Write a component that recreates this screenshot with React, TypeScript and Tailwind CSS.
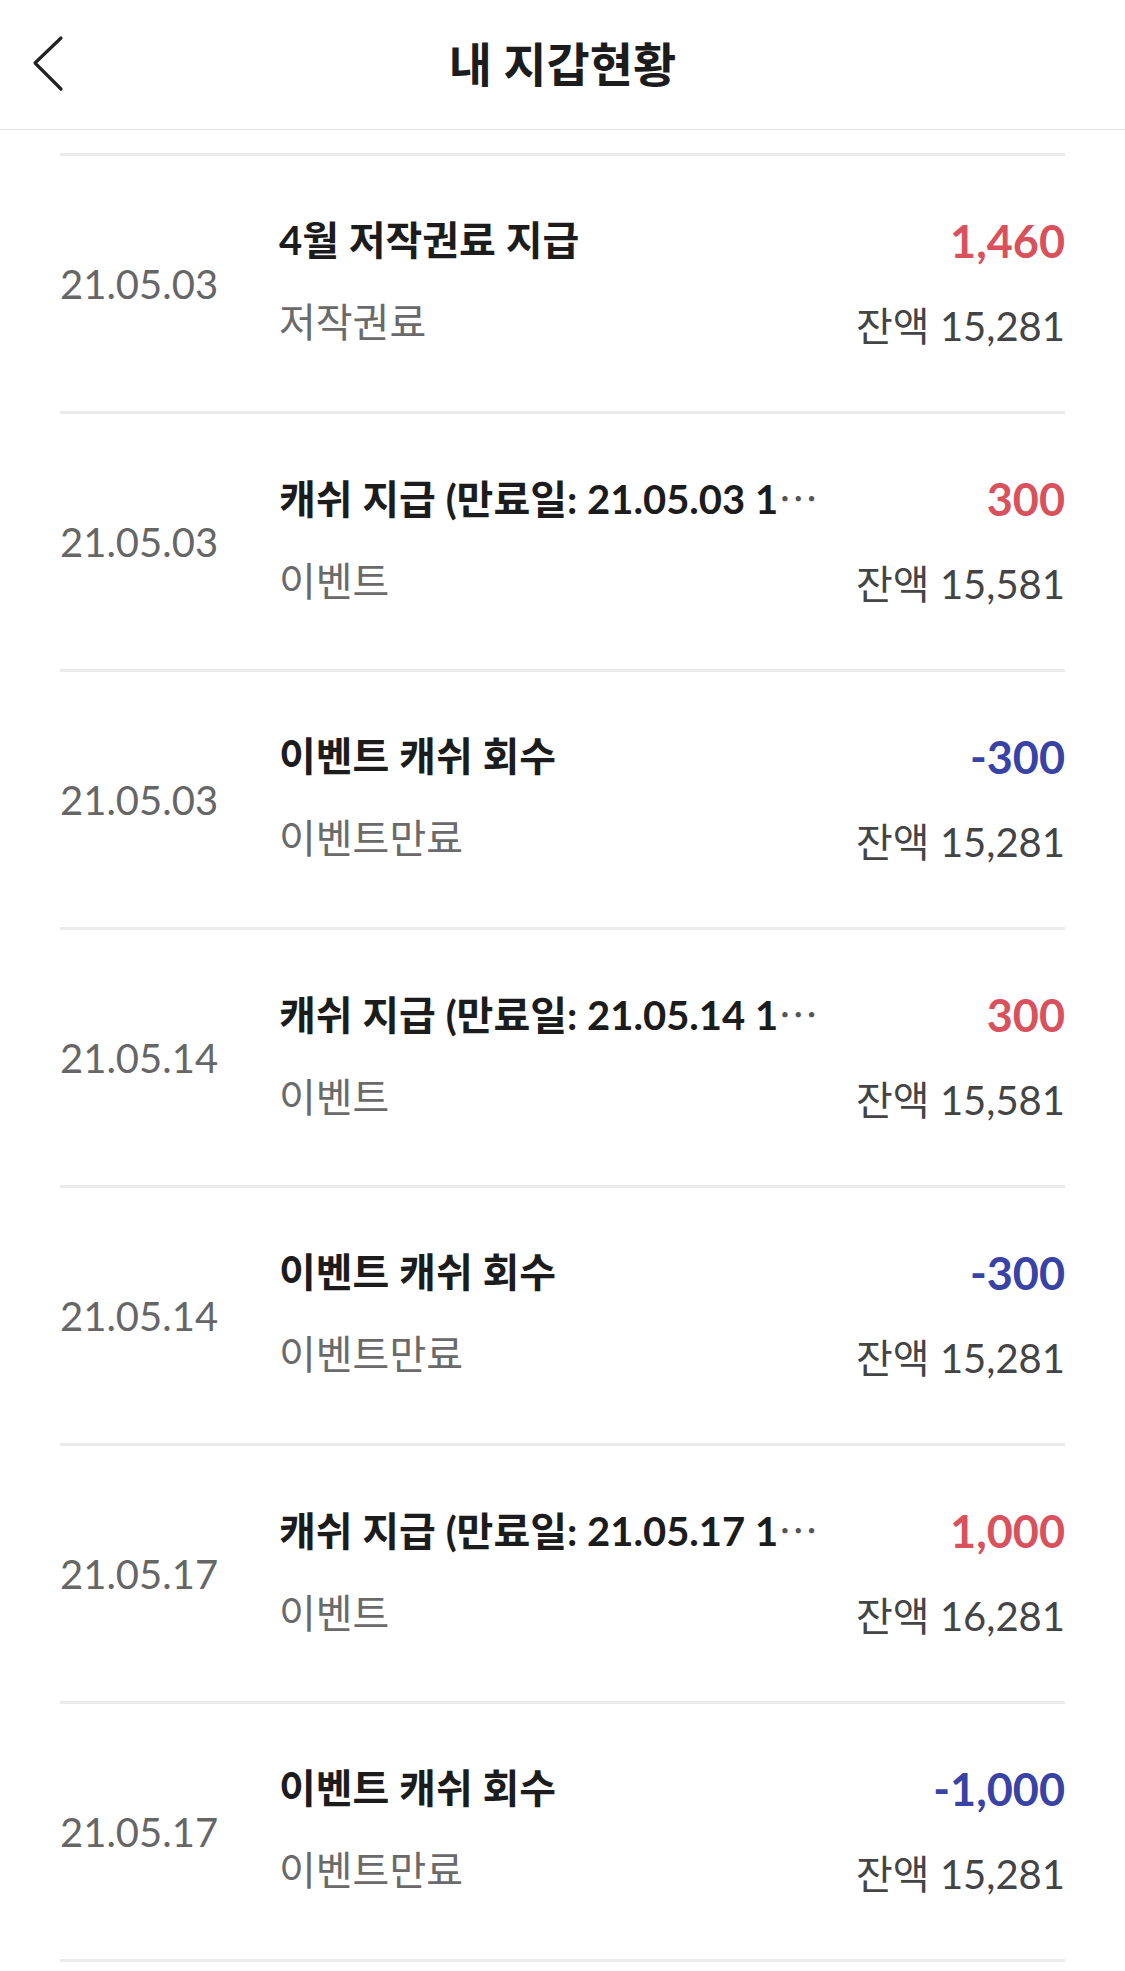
import { ReactNode } from 'react';

interface WalletRow {
  date: string;
  title: string;
  cut?: boolean;
  label: string;
  amount: string;
  balance: string;
}

const rows: WalletRow[] = [
  { date: '21.05.03', title: '4월 저작권료 지급', label: '저작권료', amount: '1,460', balance: '15,281' },
  { date: '21.05.03', title: '캐쉬 지급 (만료일: 21.05.03 1', cut: true, label: '이벤트', amount: '300', balance: '15,581' },
  { date: '21.05.03', title: '이벤트 캐쉬 회수', label: '이벤트만료', amount: '-300', balance: '15,281' },
  { date: '21.05.14', title: '캐쉬 지급 (만료일: 21.05.14 1', cut: true, label: '이벤트', amount: '300', balance: '15,581' },
  { date: '21.05.14', title: '이벤트 캐쉬 회수', label: '이벤트만료', amount: '-300', balance: '15,281' },
  { date: '21.05.17', title: '캐쉬 지급 (만료일: 21.05.17 1', cut: true, label: '이벤트', amount: '1,000', balance: '16,281' },
  { date: '21.05.17', title: '이벤트 캐쉬 회수', label: '이벤트만료', amount: '-1,000', balance: '15,281' },
];

function BackIcon() {
  return (
    <svg width="40" height="60" viewBox="0 0 40 60" fill="none">
      <path d="M29 5 L3 30 L29 56" stroke="#222" strokeWidth="3.2" strokeLinecap="round" strokeLinejoin="round" />
    </svg>
  );
}

function Row({ row }: { row: WalletRow }) {
  const minus = row.amount.startsWith('-');
  let title: ReactNode = row.title;
  if (row.cut) {
    title = (
      <>
        {row.title}
        <span className="font-['Noto_Sans_CJK_KR',sans-serif] font-normal text-[#555]">⋯</span>
      </>
    );
  }

  return (
    <div className="flex items-center h-[258px] border-b-[3px] border-[#ebebeb]">
      {/* date */}
      <div className="w-[219px] shrink-0 text-[40px] leading-[46px] text-[#666]">{row.date}</div>

      {/* title + label */}
      <div className="flex-1 min-w-0 flex flex-col gap-[36px] pb-[5px]">
        <div className="text-[40px] leading-[46px] font-bold text-[#1c1c1c] whitespace-nowrap">
          {title}
        </div>
        <div className="text-[40px] leading-[46px] text-[#6a6a6a]">{row.label}</div>
      </div>

      {/* amount + balance */}
      <div className="shrink-0 flex flex-col items-end gap-[39px]">
        <div className={`text-[45px] leading-[46px] font-bold ${minus ? 'text-[#3943a6]' : 'text-[#d8515d]'}`}>
          {row.amount}
        </div>
        <div className="text-[40px] leading-[46px] text-[#444]">잔액 {row.balance}</div>
      </div>
    </div>
  );
}

export default function App() {
  return (
    <div className="w-[1125px] min-h-[1971px] bg-white font-[Lato,'Noto_Sans_CJK_KR',sans-serif] overflow-hidden">
      {/* Header */}
      <header className="relative h-[130px] border-b border-[#e2e2e2] flex items-center justify-center">
        <button className="absolute left-[32px] top-[33px]">
          <BackIcon />
        </button>
        <h1 className="text-[47px] font-bold text-[#1c1c1c]">내 지갑현황</h1>
      </header>

      {/* History list */}
      <div className="mx-[60px] mt-[23px] border-t-[3px] border-[#ebebeb]">
        {rows.map((row, i) => (
          <Row key={i} row={row} />
        ))}
      </div>
    </div>
  );
}
